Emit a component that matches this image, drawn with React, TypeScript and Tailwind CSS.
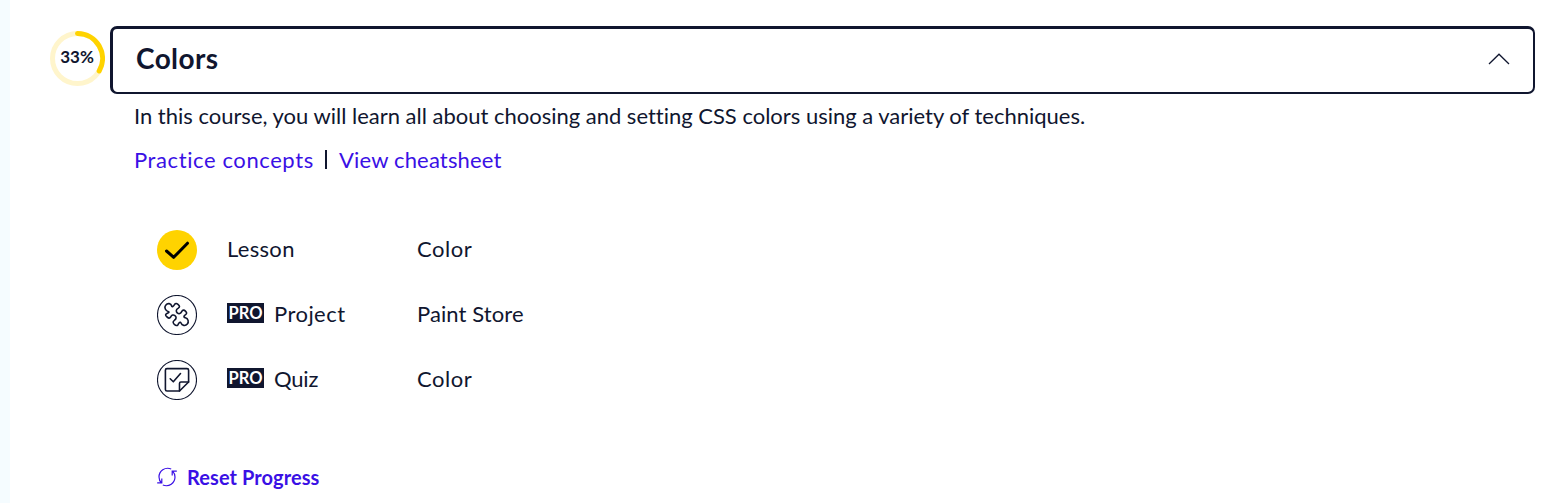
import React from "react";

function ProgressRing() {
  return (
    <div className="grid h-[55px] w-[55px] place-items-center">
      <svg className="col-start-1 row-start-1" width="55" height="55" viewBox="0 0 55 55" fill="none">
        <circle cx="27.5" cy="27.5" r="25" stroke="#fff5cc" strokeWidth="5" />
        <path d="M27.5 2.5A25 25 0 0 1 49.2 40" stroke="#ffd300" strokeWidth="5" strokeLinecap="round" />
      </svg>
      <span className="col-start-1 row-start-1 -mt-[3px] -ml-px text-[17px] leading-5 font-bold">33%</span>
    </div>
  );
}

function CheckIcon() {
  return (
    <svg width="40" height="40" viewBox="0 0 40 40" fill="none">
      <circle cx="20" cy="20" r="20" fill="#ffd300" />
      <path d="M9.5 21L16.7 27.3L30.5 13.2" stroke="#000" strokeWidth="3" strokeLinecap="round" strokeLinejoin="round" />
    </svg>
  );
}

function PuzzleIcon() {
  return (
    <svg width="40" height="40" viewBox="0 0 40 40" fill="none" stroke="#10162f">
      <circle cx="20" cy="20" r="19.5" strokeWidth="1.1" />
      <g transform="translate(5 5) scale(.3333)">
        <path
          d="M20 35C10 33 6 22 11 16C17 8 27 10 29 18C30 22 34 20 38 13C41 9 44 10 48 13C54 18 54 21 48 25C41 29 42 36 46 39C51 43 56 41 59 35C62 29 66 29 71 34C76 39 74 42 68 46C64 50 66 53 70 53C79 55 81 66 76 72C70 79 60 77 57 69C55 65 51 67 48 74C45 78 42 77 37 73C32 68 32 65 38 60C44 56 43 50 39 47C34 43 29 45 26 51C23 56 19 55 14 50C9 45 10 43 16 40C20 38 22 36 20 35Z"
          strokeWidth="4.8"
          strokeLinejoin="round"
        />
      </g>
    </svg>
  );
}

function QuizIcon() {
  return (
    <svg width="40" height="40" viewBox="0 0 40 40" fill="none" stroke="#10162f" strokeLinejoin="round" strokeLinecap="round">
      <circle cx="20" cy="20" r="19.5" strokeWidth="1.1" />
      <path d="M10 8.6H30Q31.6 8.6 31.6 10.2V22L22.5 31H10Q8.4 31 8.4 29.4V10.2Q8.4 8.6 10 8.6Z" strokeWidth="1.6" />
      <path d="M22.5 31V23.4Q22.5 22 23.9 22H31.6M13.2 18.8L16.3 21.8L23.5 13.5" strokeWidth="1.6" />
    </svg>
  );
}

function ResetIcon() {
  return (
    <svg width="20" height="20" viewBox="0 0 20 20" fill="none" stroke="#3a10e5" strokeWidth="1.2">
      <path d="M14.2 2C8 -0.5 2 4 2 10Q2 13.5 4.6 16.2M0.2 15.8H4.8V11.5" />
      <path d="M5.8 18C12 20.5 18 16 18 10Q18 6.5 15.4 3.8M19.8 4.2H15.2V8.5" />
    </svg>
  );
}

function Pro() {
  return (
    <span className="mr-[10px] -mt-px flex h-5 w-[37px] items-center justify-center bg-[#10162f] text-[16.5px] leading-5 font-bold text-white">
      PRO
    </span>
  );
}

type RowProps = { icon: React.ReactNode; kind: string; title: string; pro?: boolean; kindClass: string; titleClass: string };

function Row({ icon, kind, title, pro, kindClass, titleClass }: RowProps) {
  return (
    <li className="flex h-[65px] items-center">
      {icon}
      <div className="-mt-[2px] ml-[30px] flex w-[190px] items-center">
        {pro && <Pro />}
        <span className={kindClass}>{kind}</span>
      </div>
      <span className={titleClass}>{title}</span>
    </li>
  );
}

export default function App() {
  return (
    <div className="flex h-[503px] overflow-hidden bg-white font-['Lato',sans-serif] text-[22px] leading-[30px] text-[#10162f]">
      <div className="w-[10px] shrink-0 bg-[#f5fcff]" />
      <main className="min-w-0 flex-1 pt-[26px] pr-[13px] pl-[40px]">
        <div className="flex">
          <div className="mt-[5px] mr-[5px]">
            <ProgressRing />
          </div>
          <button className="flex h-[68px] flex-1 items-center justify-between rounded-[7px] border-2 border-t-[3px] border-l-[3px] border-[#10162f] pr-[23px] pl-[23px]">
            <h2 className="-mt-[5px] text-[28px] font-bold tracking-[0.4px]">Colors</h2>
            <svg className="-mt-[3px]" width="22" height="12" viewBox="0 0 22 12" fill="none" stroke="#10162f" strokeWidth="1.3">
              <path d="M1 11L11 1.2L21 11" />
            </svg>
          </button>
        </div>
        <div className="pl-[84px]">
          <p className="mt-[7px] tracking-[-0.01px]">In this course, you will learn all about choosing and setting CSS colors using a variety of techniques.</p>
          <div className="mt-[14px] flex text-[#3a10e5]">
            <a className="w-[191px] tracking-[0.6px]">Practice concepts</a>
            <span className="mt-[5px] mr-[11px] h-[19px] w-[2px] bg-[#10162f]" />
            <a className="ml-px tracking-[0.17px]">View cheatsheet</a>
          </div>
          <ul className="mt-[42px] pl-[23px]">
            <Row icon={<CheckIcon />} kind="Lesson" title="Color" kindClass="tracking-[0.3px]" titleClass="-mt-[2px] tracking-[0.55px]" />
            <Row icon={<PuzzleIcon />} kind="Project" title="Paint Store" pro kindClass="tracking-[0.45px]" titleClass="-mt-[2px] tracking-[0.1px]" />
            <Row icon={<QuizIcon />} kind="Quiz" title="Color" pro kindClass="tracking-[-0.2px]" titleClass="-mt-[2px] tracking-[0.55px]" />
          </ul>
          <button className="mt-[50px] ml-[23px] flex items-center text-[20px] font-bold text-[#3a10e5]">
            <ResetIcon />
            <span className="ml-[10px] tracking-[0.08px]">Reset Progress</span>
          </button>
        </div>
      </main>
    </div>
  );
}
